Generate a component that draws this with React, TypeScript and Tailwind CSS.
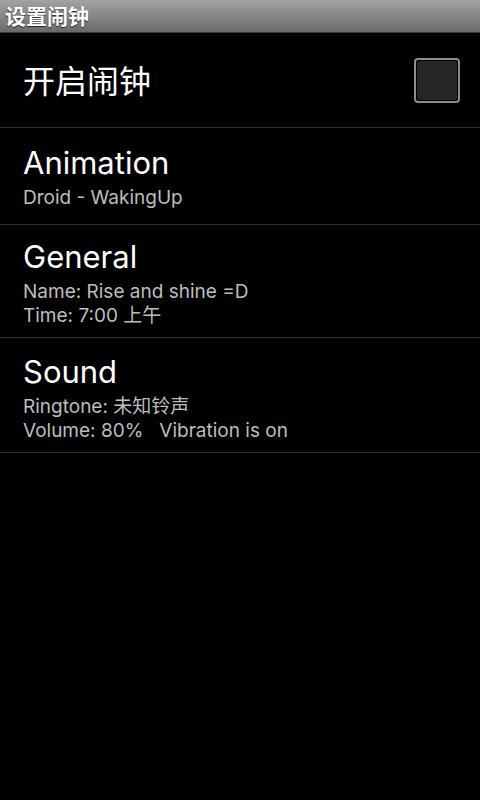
import React from "react";

const font = { fontFamily: "Inter, 'Noto Sans CJK SC', sans-serif" };

function Row({
  title,
  lines,
  className,
}: {
  title: string;
  lines: string[];
  className: string;
}) {
  return (
    <div className={`flex flex-col border-b border-[#2e2e2e] px-[23px] ${className}`}>
      <div className="text-[31px] leading-[36px] text-white">{title}</div>
      <div className="mt-[5px] flex flex-col">
        {lines.map((l, i) => (
          <div key={i} className="whitespace-pre text-[19px] leading-[23.5px] text-[#bdbdbd]">
            {l}
          </div>
        ))}
      </div>
    </div>
  );
}

export default function App() {
  return (
    <div className="flex h-[800px] w-[480px] flex-col bg-black" style={font}>
      <div className="flex h-[33px] items-center border-b border-[#3a3a3a] bg-gradient-to-b from-[#a3a3a3] to-[#6a6a6a] px-[5px]">
        <span className="text-[21px] font-bold leading-none text-white [text-shadow:0_1px_1px_rgba(0,0,0,0.7)]">
          设置闹钟
        </span>
      </div>
      <div className="flex h-[95px] items-center justify-between border-b border-[#2e2e2e] pl-[23px] pr-[20px]">
        <span className="pt-[4px] text-[32px] leading-none text-white">开启闹钟</span>
        <div className="h-[45px] w-[46px] rounded-[4px] border-2 border-[#8c8c8c] bg-black p-[1px]">
          <div className="h-full w-full rounded-[2px] bg-[#262626]" />
        </div>
      </div>
      <Row className="h-[97px] pt-[17px]" title="Animation" lines={["Droid - WakingUp"]} />
      <Row
        className="h-[113px] pt-[14px]"
        title="General"
        lines={["Name: Rise and shine =D", "Time: 7:00 上午"]}
      />
      <Row
        className="h-[115px] pt-[16px]"
        title="Sound"
        lines={["Ringtone: 未知铃声", "Volume: 80%   Vibration is on"]}
      />
    </div>
  );
}
